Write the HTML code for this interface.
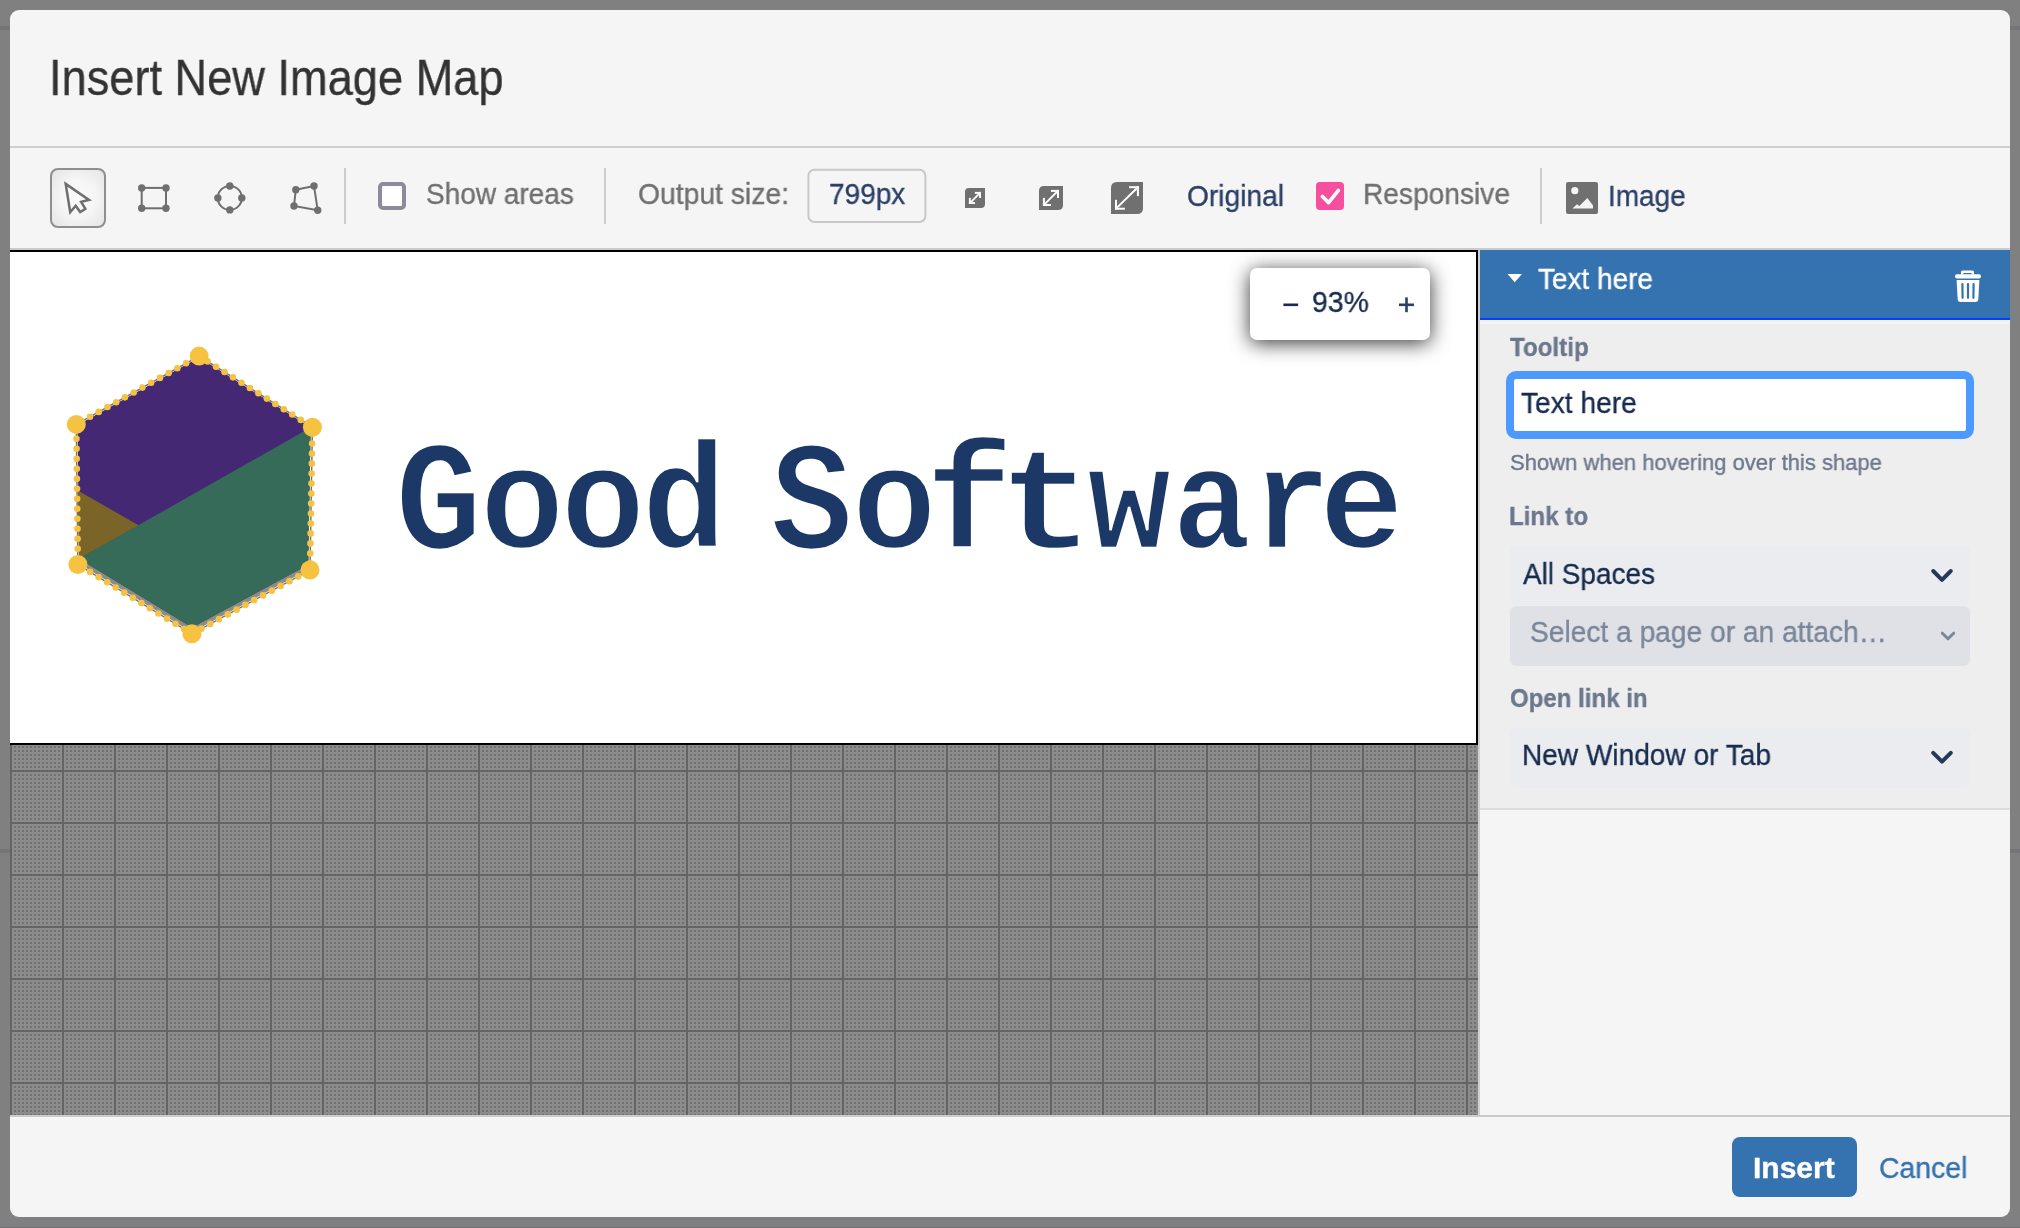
<!DOCTYPE html>
<html><head><meta charset="utf-8">
<style>
html,body{margin:0;padding:0;}
body{width:2020px;height:1228px;overflow:hidden;background:#808080;position:relative;font-family:"Liberation Sans",sans-serif;}
.abs{position:absolute;}
.t{position:absolute;white-space:nowrap;line-height:1;-webkit-text-stroke:0.35px currentColor;will-change:transform;}
.grid{background-color:#8c8c8c;background-image:linear-gradient(to right,#646464 2px,transparent 2px),linear-gradient(to bottom,#646464 2px,transparent 2px),linear-gradient(to right,transparent 2px,#8c8c8c 2px),linear-gradient(to bottom,#717171 2px,#8c8c8c 2px);background-size:52px 52px,52px 52px,4px 4px,4px 4px;}
#dlg{position:absolute;left:10px;top:10px;width:2000px;height:1207px;background:#f5f5f5;border-radius:9px;overflow:hidden;}
</style></head>
<body>
<div class="abs" style="left:0;top:26px;width:2020px;height:4px;background:#737579"></div>
<div class="abs" style="left:0;top:849px;width:2020px;height:4px;background:#747578"></div>
<div class="abs" style="left:0;top:1227px;width:2020px;height:1px;background:#6e7074"></div>
<div id="dlg"></div>

<!-- header -->
<div class="t" id="title" style="left:49.13px;top:53.83px;font-size:49.70px;color:#333;transform:scaleX(0.9093);transform-origin:0 0;">Insert New Image Map</div>
<div class="abs" style="left:10px;top:146px;width:2000px;height:2px;background:#cfcfcf"></div>

<!-- toolbar bottom border -->
<div class="abs" style="left:10px;top:248px;width:2000px;height:2px;background:#cbcbcb"></div>


<!-- toolbar icons -->
<div class="abs" style="left:50px;top:168px;width:52px;height:56px;border:2px solid #8f8f8f;border-radius:8px;background:radial-gradient(ellipse at center,#fbfbfb 0%,#f6f6f6 45%,#e4e4e4 100%);"></div>
<svg class="abs" style="left:0;top:0;" width="2020" height="260" viewBox="0 0 2020 260">
 <g fill="none" stroke="#6f6f6f" stroke-width="2.5" stroke-linejoin="miter">
  <path d="M65.7 183.9 L89 200 L81.1 201.8 L85.4 208.8 L80.2 212 L75.7 205.7 L70.2 212.2 Z"/>
 </g>
 <g fill="#6f6f6f" stroke="#6f6f6f">
  <rect x="141.7" y="187.9" width="24.3" height="20.4" fill="none" stroke-width="2"/>
  <circle cx="141.7" cy="187.9" r="3.7" stroke="none"/><circle cx="166" cy="187.9" r="3.7" stroke="none"/>
  <circle cx="141.7" cy="208.3" r="3.7" stroke="none"/><circle cx="166" cy="208.3" r="3.7" stroke="none"/>
  <circle cx="229.8" cy="197.9" r="12" fill="none" stroke-width="2"/>
  <circle cx="229.8" cy="186" r="3.7" stroke="none"/><circle cx="229.8" cy="209.9" r="3.7" stroke="none"/>
  <circle cx="217.9" cy="197.9" r="3.7" stroke="none"/><circle cx="241.8" cy="197.9" r="3.7" stroke="none"/>
  <path d="M295.8 189.7 L314 186 L317.7 210.2 L294 206 Z" fill="none" stroke-width="2"/>
  <circle cx="295.8" cy="189.7" r="3.7" stroke="none"/><circle cx="314" cy="186" r="3.7" stroke="none"/>
  <circle cx="294" cy="206" r="3.7" stroke="none"/><circle cx="317.7" cy="210.2" r="3.7" stroke="none"/>
 </g>
 <!-- separators -->
 <rect x="344" y="168" width="2" height="56" fill="#cccccc"/>
 <rect x="604" y="168" width="2" height="56" fill="#cccccc"/>
 <rect x="1540" y="168" width="2" height="56" fill="#cccccc"/>
 <!-- checkbox -->
 <rect x="380" y="184" width="24" height="24" rx="3" fill="#fff" stroke="#8c8b9c" stroke-width="4"/>
 <!-- output box -->
 <rect x="808.4" y="169.7" width="117" height="52.3" rx="6" fill="none" stroke="#c8c8c8" stroke-width="2"/>
 <!-- resize icons -->
 <path d="M965 192 Q965 188 969 188 L985 188 L985 204 Q985 208 981 208 L965 208 Z" fill="#707070"/>
 <g fill="#fff"><rect x="974.9" y="191.9" width="6.1" height="1.9"/><rect x="979.1" y="191.9" width="1.9" height="6.1"/><rect x="968.9" y="197.9" width="1.9" height="6.1"/><rect x="968.9" y="202.1" width="6.1" height="1.9"/></g><path d="M970.6 202.3 L979.3 193.6" stroke="#fff" stroke-width="1.8"/>
 <path d="M1039 191 Q1039 186 1044 186 L1063 186 L1063 205 Q1063 210 1058 210 L1039 210 Z" fill="#707070"/>
 <g fill="#fff"><rect x="1050.9" y="189.9" width="8.1" height="2.0"/><rect x="1057.0" y="189.9" width="2.0" height="8.1"/><rect x="1042.9" y="197.9" width="2.0" height="8.1"/><rect x="1042.9" y="204.0" width="8.1" height="2.0"/></g><path d="M1044.7 204.2 L1057.2 191.7" stroke="#fff" stroke-width="1.9"/>
 <path d="M1111 188 Q1111 182 1117 182 L1143 182 L1143 208 Q1143 214 1137 214 L1111 214 Z" fill="#707070"/>
 <g fill="#fff"><rect x="1129.0" y="186.2" width="9.9" height="2.0"/><rect x="1136.9" y="186.2" width="2.0" height="9.9"/><rect x="1115.0" y="199.8" width="2.0" height="9.9"/><rect x="1115.0" y="207.7" width="9.9" height="2.0"/></g><path d="M1116.8 207.9 L1137.1 188.0" stroke="#fff" stroke-width="2.0"/>
 <!-- pink checkbox -->
 <rect x="1316" y="182" width="28" height="28" rx="4" fill="#f74f9e"/>
 <path d="M1322.4 196.5 L1328.6 202.6 L1338.4 190.3" fill="none" stroke="#fff" stroke-width="3.6" stroke-linecap="round" stroke-linejoin="round"/>
 <!-- image icon -->
 <rect x="1566" y="182" width="32" height="32" rx="2" fill="#707070"/>
 <circle cx="1574.8" cy="190.7" r="3.6" fill="#f4f4f4"/>
 <path d="M1572.5 208.5 L1577 204.3 L1579.4 206 L1587.3 198.1 L1593 205.5 L1593 208.5 Z" fill="#f4f4f4"/>
</svg>

<!-- toolbar text -->
<div class="t" id="show" style="left:426.00px;top:179.24px;font-size:29.60px;color:#707070;transform:scaleX(0.9459);transform-origin:0 0;">Show areas</div>
<div class="t" id="outsz" style="left:637.69px;top:179.34px;font-size:29.60px;color:#707070;transform:scaleX(0.9563);transform-origin:0 0;">Output size:</div>
<div class="t" id="px" style="left:829.00px;top:178.94px;font-size:29.60px;color:#2b3f66;transform:scaleX(0.9459);transform-origin:0 0;">799px</div>
<div class="t" id="orig" style="left:1186.79px;top:181.24px;font-size:29.60px;color:#2b3f66;transform:scaleX(0.9510);transform-origin:0 0;">Original</div>
<div class="t" id="resp" style="left:1363.49px;top:179.14px;font-size:29.60px;color:#707070;transform:scaleX(0.9506);transform-origin:0 0;">Responsive</div>
<div class="t" id="img" style="left:1608.00px;top:180.94px;font-size:29.60px;color:#2b3f66;transform:scaleX(0.9459);transform-origin:0 0;">Image</div>

<!-- canvas -->
<div class="abs grid" style="left:10px;top:250px;width:1468px;height:865px;"></div>
<div class="abs" style="left:10px;top:250px;width:1466px;height:493px;background:#fff;border-top:2px solid #000;border-bottom:2px solid #000;border-right:2px solid #000;box-sizing:border-box;width:1468px;height:495px;"></div>
<svg class="abs" style="left:0;top:0;" width="1480" height="745" viewBox="0 0 1480 745">
 <!-- logo -->
 <polygon points="199.1,357.6 310.6,427.6 308.2,569.5 191.9,632.3 79.2,563.8 77.6,425.2" fill="#8b8b8b"/>
 <polygon points="199.1,357.6 310.6,427.6 308.3,564.7 192.1,627.5 79.1,558.8 77.6,425.2" fill="#442874"/>
 <polygon points="77.8,490.4 139,525.4 79.1,558.8" fill="#7a6428"/>
 <polygon points="79.1,558.8 310.6,427.6 308.3,564.7 192.1,627.5" fill="#356b58"/>
 <!-- overlay polygon -->
 <g fill="none">
  <polygon points="199.1,356.1 312.4,427.2 310,570 191.9,633.8 77.9,564.5 76.3,424.4" stroke="#6e6e6e" stroke-width="1.4"/>
  <polygon points="199.1,356.1 312.4,427.2 310,570 191.9,633.8 77.9,564.5 76.3,424.4" stroke="#f5c242" stroke-width="6.6" stroke-dasharray="0 10" stroke-linecap="round"/>
 </g>
 <g fill="#f5c242">
  <circle cx="199.1" cy="356.1" r="9.5"/><circle cx="312.4" cy="427.2" r="9.5"/><circle cx="310" cy="570" r="9.5"/>
  <circle cx="191.9" cy="633.8" r="9.5"/><circle cx="77.9" cy="564.5" r="9.5"/><circle cx="76.3" cy="424.4" r="9.5"/>
 </g>
</svg>
<svg class="abs" id="gs" style="left:0;top:0;" width="1480" height="745" viewBox="0 0 1480 745"><g font-family="Liberation Mono" font-weight="bold" font-size="148" fill="#1b3867" stroke="#fff" stroke-width="2.6"><text transform="translate(394.9 547.5) scale(0.981 1.048)">G</text><text transform="translate(479.8 547.5) scale(0.955 0.982)">o</text><text transform="translate(560.4 547.5) scale(0.956 0.982)">o</text><text transform="translate(641.4 547.5) scale(0.960 1.012)">d</text><text transform="translate(770.6 547.5) scale(0.928 1.048)">S</text><text transform="translate(851.7 547.5) scale(0.957 0.982)">o</text><text transform="translate(925.4 547.5) scale(0.989 1.015)">f</text><text transform="translate(997.8 547.5) scale(1.088 0.973)">t</text><text transform="translate(1087.3 547.5) scale(0.944 0.990)">w</text><text transform="translate(1172.2 547.5) scale(0.889 0.982)">a</text><text transform="translate(1252.0 547.5) scale(0.895 0.982)">r</text><text transform="translate(1318.9 547.5) scale(0.960 0.982)">e</text></g></svg>

<!-- right panel -->
<div class="abs" style="left:1478px;top:250px;width:2px;height:865px;background:#cfcfcf"></div>
<div class="abs" style="left:1480px;top:250px;width:530px;height:68px;background:#3572b0"></div>
<div class="abs" style="left:1480px;top:318px;width:530px;height:2px;background:#0a3cff"></div>
<div class="abs" style="left:1480px;top:320px;width:530px;height:488px;background:#eeeeee"></div>
<div class="abs" style="left:1480px;top:320px;width:530px;height:4px;background:#f3f3f3"></div>
<div class="abs" style="left:1480px;top:808px;width:530px;height:2px;background:#dcdcdc"></div>
<div class="t" id="hdr" style="left:1538.40px;top:263.94px;font-size:29.60px;color:#fff;transform:scaleX(0.9443);transform-origin:0 0;">Text here</div>

<div class="t" id="lbl1" style="left:1510.20px;top:334.55px;font-size:25.10px;font-weight:bold;color:#6b778c;transform:scaleX(0.9624);transform-origin:0 0;">Tooltip</div>
<div class="abs" style="left:1506px;top:371px;width:452px;height:52px;background:#fff;border:8px solid #4c9aff;border-radius:10px;"></div>
<div class="t" id="inp" style="left:1521.29px;top:388.14px;font-size:29.60px;color:#172b4d;transform:scaleX(0.9510);transform-origin:0 0;">Text here</div>
<div class="t" id="help" style="left:1509.80px;top:452.39px;font-size:22.10px;color:#6b778c;transform:scaleX(0.9960);transform-origin:0 0;">Shown when hovering over this shape</div>

<div class="t" id="lbl2" style="left:1509.39px;top:504.05px;font-size:25.10px;font-weight:bold;color:#6b778c;transform:scaleX(0.9612);transform-origin:0 0;">Link to</div>
<div class="abs" style="left:1510px;top:546px;width:460px;height:59px;background:#ebecf0;border-radius:6px;"></div>
<div class="t" id="all" style="left:1522.50px;top:559.04px;font-size:29.60px;color:#172b4d;transform:scaleX(0.9445);transform-origin:0 0;">All Spaces</div>
<div class="abs" style="left:1510px;top:606px;width:460px;height:60px;background:#dfe1e6;border-radius:6px;"></div>
<div class="t" id="sel" style="left:1529.99px;top:617.34px;font-size:29.60px;color:#7a869a;transform:scaleX(0.9514);transform-origin:0 0;">Select a page or an attach…</div>

<div class="t" id="lbl3" style="left:1510.20px;top:685.55px;font-size:25.10px;font-weight:bold;color:#6b778c;transform:scaleX(0.9583);transform-origin:0 0;">Open link in</div>
<div class="abs" style="left:1510px;top:728px;width:460px;height:60px;background:#ebecf0;border-radius:6px;"></div>
<div class="t" id="nw" style="left:1521.50px;top:740.04px;font-size:29.60px;color:#172b4d;transform:scaleX(0.9479);transform-origin:0 0;">New Window or Tab</div>

<!-- zoom widget -->
<div class="abs" style="left:1250px;top:268px;width:180px;height:72px;background:#fff;border-radius:7px;box-shadow:0 3px 20px rgba(0,0,0,0.8);"></div>
<div class="t" id="zoom" style="left:1311.79px;top:287.24px;font-size:29.60px;color:#172b4d;transform:scaleX(0.9582);transform-origin:0 0;">93%</div>

<!-- footer -->
<div class="abs" style="left:10px;top:1115px;width:2000px;height:2px;background:#cbcbcb"></div>
<div class="abs" style="left:1732px;top:1137px;width:125px;height:60px;background:#3572b0;border-radius:8px;"></div>
<div class="t" id="ins" style="left:1753.26px;top:1153.23px;font-size:29.50px;font-weight:bold;color:#fff;transform:scaleX(1.0171);transform-origin:0 0;">Insert</div>
<div class="t" id="cancel" style="left:1879.38px;top:1153.14px;font-size:29.60px;color:#3572b0;transform:scaleX(0.9604);transform-origin:0 0;">Cancel</div>


<!-- zoom widget icons, panel icons -->
<svg class="abs" style="left:0;top:0;" width="2020" height="1228" viewBox="0 0 2020 1228">
 <rect x="1283.4" y="303.5" width="14.7" height="2.6" fill="#172b4d"/>
 <rect x="1399" y="303.5" width="15" height="2.6" fill="#2b3f66"/>
 <rect x="1405.2" y="297.4" width="2.6" height="14.8" fill="#2b3f66"/>
 <path d="M1507.5 273.9 L1522 273.9 L1514.75 282.2 Z" fill="#fff"/>
 <g fill="#fff">
  <path d="M1962.5 270.5 h10 a1.5 1.5 0 0 1 1.5 1.5 v2.6 h-2.4 v-1.7 h-8.2 v1.7 h-2.4 v-2.6 a1.5 1.5 0 0 1 1.5 -1.5 Z"/>
  <rect x="1955" y="274.2" width="26" height="4.2" rx="2"/>
  <path d="M1956.6 280 L1979.4 280 L1978.3 299.5 Q1978.1 302 1975.6 302 L1960.4 302 Q1957.9 302 1957.7 299.5 Z"/>
 </g>
 <g stroke="#3572b0" stroke-width="2.2" stroke-linecap="round">
  <path d="M1962.4 284.2 L1962.6 297.8"/><path d="M1968 284.2 L1968 297.8"/><path d="M1973.6 284.2 L1973.4 297.8"/>
 </g>
 <g fill="none" stroke-linecap="round" stroke-linejoin="round">
  <path d="M1933.2 571 L1942 579.8 L1950.8 571" stroke="#253858" stroke-width="4"/>
  <path d="M1942.3 633.2 L1948 638.8 L1953.7 633.2" stroke="#7a869a" stroke-width="3"/>
  <path d="M1933.2 752.8 L1942 761.6 L1950.8 752.8" stroke="#253858" stroke-width="4"/>
 </g>
</svg>
</body></html>
